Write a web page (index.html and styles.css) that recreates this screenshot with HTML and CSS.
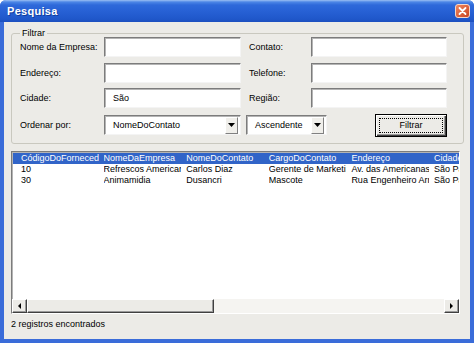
FILE: index.html
```html
<!DOCTYPE html>
<html lang="pt">
<head>
<meta charset="UTF-8">
<title>Pesquisa</title>
<link rel="stylesheet" href="styles.css">
</head>
<body>
<div class="window">
  <div class="titlebar">
    <span class="title">Pesquisa</span>
    <svg class="close" width="15" height="14" viewBox="0 0 15 14">
      <defs>
        <linearGradient id="cg" x1="0" y1="0" x2="1" y2="1">
          <stop offset="0" stop-color="#f08a62"/>
          <stop offset="1" stop-color="#c9411d"/>
        </linearGradient>
      </defs>
      <rect x="0.5" y="0.5" width="14" height="13" rx="2.5" fill="url(#cg)" stroke="#f4d6c8"/>
      <path d="M4.5 4 L10.5 10 M10.5 4 L4.5 10" stroke="#fff" stroke-width="1.8" stroke-linecap="round"/>
    </svg>
  </div>

  <div class="client">
    <div class="frame">
      <span class="frame-title">Filtrar</span>
      <div class="filter-grid">
        <label>Nome da Empresa:</label>
        <div class="textbox"></div>
        <label class="label-right">Contato:</label>
        <div class="textbox"></div>

        <label>Endereço:</label>
        <div class="textbox"></div>
        <label class="label-right">Telefone:</label>
        <div class="textbox"></div>

        <label>Cidade:</label>
        <div class="textbox">São</div>
        <label class="label-right">Região:</label>
        <div class="textbox"></div>

        <label>Ordenar por:</label>
        <div class="combo">
          <span class="combo-text">NomeDoContato</span>
          <span class="combo-btn"><svg width="7" height="4" viewBox="0 0 7 4"><path d="M0 0 H7 L3.5 4 Z" fill="#000"/></svg></span>
        </div>
        <div class="row-end">
          <div class="combo combo-small">
            <span class="combo-text">Ascendente</span>
            <span class="combo-btn"><svg width="7" height="4" viewBox="0 0 7 4"><path d="M0 0 H7 L3.5 4 Z" fill="#000"/></svg></span>
          </div>
          <button class="btn"><span class="focus">Filtrar</span></button>
        </div>
      </div>
    </div>

    <div class="listbox">
      <div class="rows">
        <div class="row selected">
          <span>CódigoDoFornecedor</span><span>NomeDaEmpresa</span><span>NomeDoContato</span><span>CargoDoContato</span><span>Endereço</span><span>Cidade</span>
        </div>
        <div class="row">
          <span>10</span><span>Refrescos Americanas</span><span>Carlos Diaz</span><span>Gerente de Marketing</span><span>Av. das Americanas</span><span>São Paulo</span>
        </div>
        <div class="row">
          <span>30</span><span>Animamidia</span><span>Dusancri</span><span>Mascote</span><span>Rua Engenheiro Armando</span><span>São Paulo</span>
        </div>
      </div>
      <div class="hscroll">
        <span class="sb-btn"><svg width="3" height="6" viewBox="0 0 3 6"><path d="M3 0 V6 L0 3 Z" fill="#000"/></svg></span>
        <span class="sb-thumb"></span>
        <span class="sb-track"></span>
        <span class="sb-btn"><svg width="3" height="6" viewBox="0 0 3 6"><path d="M0 0 V6 L3 3 Z" fill="#000"/></svg></span>
      </div>
    </div>

    <div class="status">2 registros encontrados</div>
  </div>
</div>
</body>
</html>
```

FILE: styles.css
```css
body {
  margin: 0;
  font-family: "Liberation Sans", Arial, sans-serif;
  font-size: 9px;
  color: #000;
}
.window {
  width: 474px;
  height: 343px;
  display: flex;
  flex-direction: column;
  background: #3a6cd9;
  border-radius: 6px 6px 0 0;
  overflow: hidden;
}
.titlebar {
  flex: none;
  height: 22px;
  display: flex;
  align-items: center;
  justify-content: space-between;
  padding: 0 4px 0 7px;
  background: linear-gradient(#9cc0f3 0, #4c86e6 2px, #2e69da 5px, #2761d5 11px, #1f57ca 19px, #1c4fbf 22px);
}
.title {
  color: #fff;
  font-weight: bold;
  font-size: 11px;
  letter-spacing: 0.3px;
  text-shadow: 1px 1px #123e9e;
}
.close {
  display: block;
}
.client {
  flex: 1;
  margin: 0 4px 4px;
  padding: 11px 0 0 7px;
  background: #ecebe7;
  display: flex;
  flex-direction: column;
}
.frame {
  position: relative;
  width: 453px;
  box-sizing: border-box;
  border: 1px solid #c9c8bf;
  border-radius: 3px;
  padding: 3px 16px 6px 8px;
}
.frame-title {
  position: absolute;
  top: -6px;
  left: 8px;
  padding: 0 2px;
  line-height: 11px;
  background: #ecebe7;
}
.filter-grid {
  display: grid;
  grid-template-columns: 84px 137px 70px 136px;
  grid-template-rows: 20px 20px 20px 23px;
  row-gap: 5.5px;
  align-items: center;
}
.label-right {
  padding-left: 8px;
}
.textbox,
.combo {
  height: 20px;
  box-sizing: border-box;
  background: #fff;
  border: 1px solid;
  border-color: #7c7c7c #f4f4f4 #f4f4f4 #7c7c7c;
  box-shadow: inset 1px 1px #b4b4b4;
  padding-left: 8px;
  line-height: 18px;
}
.combo {
  display: flex;
  align-items: center;
  padding-right: 2px;
}
.combo-text {
  flex: 1;
}
.combo-btn {
  width: 11px;
  height: 15px;
  display: flex;
  align-items: center;
  justify-content: center;
  background: #f0efeb;
  border: 1px solid;
  border-color: #fff #808080 #808080 #fff;
}
.row-end {
  grid-column: 3 / 5;
  display: flex;
  justify-content: space-between;
  align-items: center;
  margin-left: 5px;
}
.combo-small {
  width: 81px;
}
.btn {
  width: 72px;
  height: 23px;
  padding: 3px;
  border: 1px solid #000;
  background: #ecebe7;
  box-shadow: inset 1px 1px #fff, inset -1px -1px #404040, inset -2px -2px #9a9a9a;
  font: inherit;
  cursor: pointer;
}
.focus {
  display: flex;
  align-items: center;
  justify-content: center;
  height: 100%;
  box-sizing: border-box;
  border: 1px dotted #000;
}
.listbox {
  width: 449px;
  height: 163px;
  margin-top: 7.5px;
  box-sizing: border-box;
  background: #fff;
  border: 1px solid;
  border-color: #7c7c7c #fff #fff #7c7c7c;
  box-shadow: inset 1px 1px #b4b4b4;
  display: flex;
  flex-direction: column;
  overflow: hidden;
}
.rows {
  flex: 1;
  padding: 1px 0 0 1px;
  overflow: hidden;
}
.row {
  display: flex;
  height: 11px;
  line-height: 11px;
  padding-left: 8px;
  white-space: nowrap;
  overflow: hidden;
}
.row span {
  flex: none;
  width: 77.6px;
  margin-right: 5px;
  overflow: hidden;
}
.row.selected {
  background: #3164c8;
  color: #fff;
}
.hscroll {
  flex: none;
  height: 14px;
  margin-top: 1px;
  display: flex;
}
.sb-btn,
.sb-thumb {
  flex: none;
  box-sizing: border-box;
  background: #ecebe7;
  border: 1px solid;
  border-color: #fff #404040 #404040 #fff;
  box-shadow: inset -1px -1px #9a9a9a;
}
.sb-btn {
  width: 15px;
  display: flex;
  align-items: center;
  justify-content: center;
}
.sb-thumb {
  width: 187px;
}
.sb-track {
  flex: 1;
  background: #f5f4f1;
}
.status {
  margin-top: 5px;
  line-height: 11px;
}
```
